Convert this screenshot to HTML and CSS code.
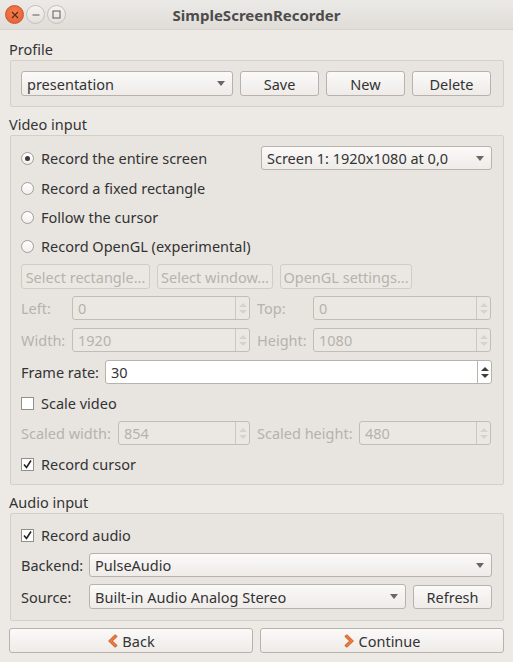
FILE: index.html
```html
<!DOCTYPE html>
<html>
<head>
  <meta name="viewport" content="width=device-width, initial-scale=1">
  <title>SimpleScreenRecorder</title>
  <link rel="stylesheet" href="styles.css">
</head>
<body>
  <div class="window">
    <div class="titlebar">
      <div class="wm-buttons">
        <span class="wm-btn wm-close">
          <svg width="8" height="8" viewBox="0 0 8 8"><path d="M1 1 L7 7 M7 1 L1 7" stroke="#5a2a16" stroke-width="1.2"/></svg>
        </span>
        <span class="wm-btn">
          <svg width="8" height="8" viewBox="0 0 8 8"><path d="M0.5 4 H7.5" stroke="#5c5c5c" stroke-width="1"/></svg>
        </span>
        <span class="wm-btn">
          <svg width="9" height="9" viewBox="0 0 9 9"><rect x="1" y="1" width="7" height="7" fill="none" stroke="#5c5c5c" stroke-width="1"/></svg>
        </span>
      </div>
      <div class="title">SimpleScreenRecorder</div>
    </div>

    <div class="content">
      <div class="group-title">Profile</div>
      <div class="group">
        <div class="row">
          <div class="combo profile-combo">presentation<span class="combo-arrow"></span></div>
          <button class="btn profile-btn">Save</button>
          <button class="btn profile-btn">New</button>
          <button class="btn profile-btn">Delete</button>
        </div>
      </div>

      <div class="group-title">Video input</div>
      <div class="group video-group">
        <div class="row first-row">
          <label class="radio checked"><span class="radio-mark"></span>Record the entire screen</label>
          <div class="combo screen-combo">Screen 1: 1920x1080 at 0,0<span class="combo-arrow"></span></div>
        </div>
        <label class="radio option-row"><span class="radio-mark"></span>Record a fixed rectangle</label>
        <label class="radio option-row"><span class="radio-mark"></span>Follow the cursor</label>
        <label class="radio option-row"><span class="radio-mark"></span>Record OpenGL (experimental)</label>

        <div class="row">
          <button class="btn disabled btn-rect">Select rectangle...</button>
          <button class="btn disabled btn-window">Select window...</button>
          <button class="btn disabled btn-gl">OpenGL settings...</button>
        </div>

        <div class="spin-grid geometry-grid">
          <span class="field-label disabled-text">Left:</span>
          <div class="spin disabled"><span class="spin-value">0</span><span class="spin-arrows"><i class="up"></i><i class="down"></i></span></div>
          <span class="field-label disabled-text">Top:</span>
          <div class="spin disabled"><span class="spin-value">0</span><span class="spin-arrows"><i class="up"></i><i class="down"></i></span></div>
          <span class="field-label disabled-text">Width:</span>
          <div class="spin disabled"><span class="spin-value">1920</span><span class="spin-arrows"><i class="up"></i><i class="down"></i></span></div>
          <span class="field-label disabled-text">Height:</span>
          <div class="spin disabled"><span class="spin-value">1080</span><span class="spin-arrows"><i class="up"></i><i class="down"></i></span></div>
        </div>

        <div class="spin-row framerate-row">
          <span class="field-label">Frame rate:</span>
          <div class="spin"><span class="spin-value">30</span><span class="spin-arrows"><i class="up"></i><i class="down"></i></span></div>
        </div>

        <label class="check option-row"><span class="check-mark"></span>Scale video</label>

        <div class="spin-grid scaled-grid">
          <span class="field-label disabled-text">Scaled width:</span>
          <div class="spin disabled"><span class="spin-value">854</span><span class="spin-arrows"><i class="up"></i><i class="down"></i></span></div>
          <span class="field-label disabled-text">Scaled height:</span>
          <div class="spin disabled"><span class="spin-value">480</span><span class="spin-arrows"><i class="up"></i><i class="down"></i></span></div>
        </div>

        <label class="check checked option-row"><span class="check-mark"><svg width="11" height="11" viewBox="0 0 11 11"><path d="M2 5.5 L4.5 8.5 L9 1.5" fill="none" stroke="#222" stroke-width="1.6"/></svg></span>Record cursor</label>
      </div>

      <div class="group-title">Audio input</div>
      <div class="group audio-group">
        <label class="check checked option-row"><span class="check-mark"><svg width="11" height="11" viewBox="0 0 11 11"><path d="M2 5.5 L4.5 8.5 L9 1.5" fill="none" stroke="#222" stroke-width="1.6"/></svg></span>Record audio</label>
        <div class="row audio-row">
          <span class="field-label audio-label">Backend:</span>
          <div class="combo grow">PulseAudio<span class="combo-arrow"></span></div>
        </div>
        <div class="row audio-row">
          <span class="field-label audio-label">Source:</span>
          <div class="combo grow">Built-in Audio Analog Stereo<span class="combo-arrow"></span></div>
          <button class="btn profile-btn">Refresh</button>
        </div>
      </div>

      <div class="nav-buttons">
        <button class="btn nav-btn">
          <svg width="11" height="14" viewBox="0 0 11 14"><path d="M8 0.8 L10.2 2.4 L5.4 7 L10.2 11.6 L8 13.2 L1.6 7 Z" fill="#ec7a3c" stroke="#c8561f" stroke-width="0.9" stroke-linejoin="round"/></svg>
          Back
        </button>
        <button class="btn nav-btn">
          <svg width="11" height="14" viewBox="0 0 11 14"><path d="M3 0.8 L0.8 2.4 L5.6 7 L0.8 11.6 L3 13.2 L9.4 7 Z" fill="#ec7a3c" stroke="#c8561f" stroke-width="0.9" stroke-linejoin="round"/></svg>
          Continue
        </button>
      </div>
    </div>
  </div>
</body>
</html>
```

FILE: styles.css
```css
* {
  box-sizing: border-box;
}

body {
  margin: 0;
  background: #edeae6;
  font-family: "Noto Sans", "Open Sans", sans-serif;
  font-size: 14.5px;
  color: #333;
}

.window {
  width: 513px;
  height: 662px;
  overflow: hidden;
}

/* title bar */
.titlebar {
  height: 30px;
  display: flex;
  align-items: center;
  background: linear-gradient(#eceae7, #e0ddd8);
  border-bottom: 1px solid #d6d2cc;
  position: relative;
}

.wm-buttons {
  display: flex;
  gap: 2px;
  padding-left: 5px;
}

.wm-btn {
  width: 19px;
  height: 19px;
  border-radius: 50%;
  border: 1px solid #c4c0ba;
  background: linear-gradient(#f6f5f3, #e3e0dc);
  display: flex;
  align-items: center;
  justify-content: center;
}

.wm-close {
  background: radial-gradient(circle at 50% 40%, #f58055, #e35a2a);
  border-color: #c9552d;
}

.title {
  position: absolute;
  left: 0;
  right: 0;
  text-align: center;
  font-weight: bold;
  font-size: 15px;
  color: #4c4c4c;
  pointer-events: none;
}

/* layout */
.content {
  padding: 0 9px;
}

.group-title {
  line-height: 20px;
  margin: 7px 0 1px 0;
}

.content > .group-title:first-child {
  margin-top: 9px;
}

.group {
  margin-left: 1px;
  border: 1px solid #d3cfc9;
  border-radius: 2px;
  background: #e8e5e1;
  padding: 10px 11px 10px 10px;
  display: flex;
  flex-direction: column;
  gap: 7px;
}

.video-group {
  padding-bottom: 9px;
}

.row {
  display: flex;
  align-items: center;
  gap: 7px;
}

.first-row {
  justify-content: space-between;
}

.option-row {
  height: 22px;
}

/* widgets */
.btn {
  height: 25px;
  font-family: inherit;
  font-size: 14.5px;
  color: #333;
  border: 1px solid #b7b2ac;
  border-radius: 3px;
  background: linear-gradient(#fbfaf9, #eeebe8);
  padding: 0 5px;
  display: flex;
  align-items: center;
  justify-content: center;
  white-space: nowrap;
}

.btn.disabled {
  color: #b6b2ac;
  border-color: #d0ccc6;
  background: #ebe8e4;
}

.profile-btn {
  width: 79px;
  flex: none;
}

.btn-rect { width: 129px; }
.btn-window { width: 116px; }
.btn-gl { width: 132px; }

.combo {
  height: 25px;
  display: flex;
  align-items: center;
  padding: 0 7px 0 5px;
  border: 1px solid #b7b2ac;
  border-radius: 3px;
  background: linear-gradient(#fbfaf9, #eeebe8);
  white-space: nowrap;
}

.combo-arrow {
  margin-left: auto;
  width: 0;
  height: 0;
  border-left: 4px solid transparent;
  border-right: 4px solid transparent;
  border-top: 5px solid #6a6763;
}

.profile-combo {
  width: 212px;
  flex: none;
}

.screen-combo {
  width: 231px;
  flex: none;
  height: 24px;
}

.grow {
  flex: 1;
}

.radio,
.check {
  display: flex;
  align-items: center;
  gap: 7px;
  white-space: nowrap;
}

.radio-mark {
  width: 13px;
  height: 13px;
  border-radius: 50%;
  border: 1px solid #a29d97;
  background: linear-gradient(#ffffff, #f1efed);
  display: flex;
  align-items: center;
  justify-content: center;
}

.radio.checked .radio-mark::after {
  content: "";
  width: 5px;
  height: 5px;
  border-radius: 50%;
  background: #3a3a3a;
}

.check-mark {
  width: 13px;
  height: 13px;
  border: 1px solid #938e88;
  background: #fff;
  display: flex;
  align-items: center;
  justify-content: center;
}

.field-label {
  white-space: nowrap;
}

.disabled-text {
  color: #b6b2ac;
}

.spin-grid {
  display: grid;
  column-gap: 7px;
  row-gap: 7px;
  align-items: start;
  grid-auto-rows: 25px;
}

.geometry-grid {
  grid-template-columns: 44px 178px 49px 178px;
}

.scaled-grid {
  grid-template-columns: 90px 132px 95px 132px;
}

.spin-grid .field-label,
.spin-row .field-label {
  line-height: 24px;
}

.spin-row {
  display: flex;
  gap: 7px;
  height: 25px;
}

.framerate-row .field-label {
  width: 77px;
}

.framerate-row .spin {
  flex: 1;
}

.spin {
  height: 24px;
  display: flex;
  border: 1px solid #b7b2ac;
  border-radius: 3px;
  background: #fff;
}

.spin.disabled {
  border-color: #c2bdb7;
  background: #ebe8e4;
  color: #b6b2ac;
}

.spin-value {
  flex: 1;
  padding-left: 5px;
  line-height: 22px;
}

.spin-arrows {
  width: 14px;
  border-left: 1px solid #b7b2ac;
  display: flex;
  flex-direction: column;
  align-items: center;
  justify-content: center;
  gap: 3px;
}

.spin.disabled .spin-arrows {
  border-left-color: #cbc7c1;
}

.spin-arrows i {
  width: 0;
  height: 0;
  border-left: 4px solid transparent;
  border-right: 4px solid transparent;
}

.spin-arrows .up {
  border-bottom: 4px solid #3d3d3d;
}

.spin-arrows .down {
  border-top: 4px solid #3d3d3d;
}

.spin.disabled .spin-arrows .up {
  border-bottom-color: #d6d3cf;
}

.spin.disabled .spin-arrows .down {
  border-top-color: #d6d3cf;
}

.audio-group {
  padding-bottom: 11px;
}

.audio-row .combo,
.audio-row .btn {
  height: 24px;
}

.audio-row:nth-of-type(2) .combo {
  height: 25px;
}

.audio-label {
  width: 61px;
}

.nav-buttons {
  display: grid;
  grid-template-columns: 1fr 1fr;
  gap: 7px;
  margin-top: 7px;
}

.nav-btn {
  gap: 4px;
}
```
